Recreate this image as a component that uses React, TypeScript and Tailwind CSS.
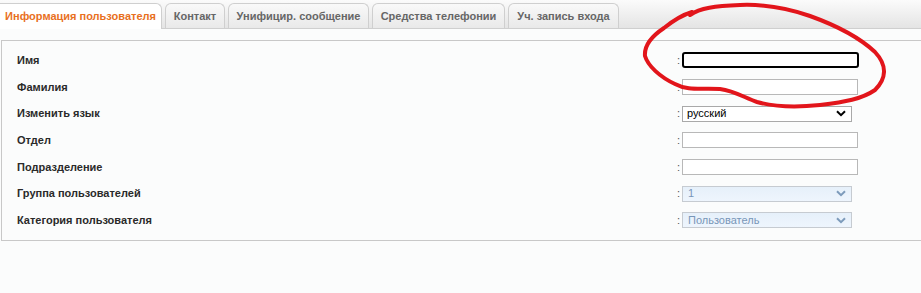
import React from "react";

const tabs = [
  { label: "Информация пользователя", w: "w-[162px]", active: true },
  { label: "Контакт", w: "w-[60px]" },
  { label: "Унифицир. сообщение", w: "w-[141px]" },
  { label: "Средства телефонии", w: "w-[133px]" },
  { label: "Уч. запись входа", w: "w-[111px]" },
];

function Chevron({ color }: { color: string }) {
  return (
    <svg width="10" height="7" viewBox="0 0 10 7" className="shrink-0">
      <path d="M1 1.2 L5 5.2 L9 1.2" fill="none" stroke={color} strokeWidth="2" />
    </svg>
  );
}

type Row = { label: string; kind: "focus" | "input" | "select" | "disabled"; value?: string };

const rows: Row[] = [
  { label: "Имя", kind: "focus" },
  { label: "Фамилия", kind: "input" },
  { label: "Изменить язык", kind: "select", value: "русский" },
  { label: "Отдел", kind: "input" },
  { label: "Подразделение", kind: "input" },
  { label: "Группа пользователей", kind: "disabled", value: "1" },
  { label: "Категория пользователя", kind: "disabled", value: "Пользователь" },
];

function Field({ row }: { row: Row }) {
  if (row.kind === "focus") {
    return <div className="h-[16px] w-[177px] rounded-[3px] border-2 border-black bg-white" />;
  }
  if (row.kind === "input") {
    return <div className="h-[16px] w-[176px] border border-[#b8b8b8] bg-white" />;
  }
  if (row.kind === "select") {
    return (
      <div className="flex h-[16px] w-[170px] items-center justify-between border border-[#a9a9a9] bg-white pl-[4px] pr-[5px] text-[11px] leading-none text-black">
        <span>{row.value}</span>
        <Chevron color="#000" />
      </div>
    );
  }
  return (
    <div className="flex h-[16px] w-[170px] items-center justify-between border border-[#c6cbd1] bg-gradient-to-b from-[#e6f0fa] to-[#eef5fd] pl-[5px] pr-[5px] text-[11px] leading-none text-[#7896b8]">
      <span>{row.value}</span>
      <Chevron color="#7d9bbb" />
    </div>
  );
}

export default function App() {
  return (
    <div
      className="relative h-[293px] w-[921px] overflow-hidden bg-[#fbfcfc]"
      style={{ fontFamily: '"Liberation Sans", Arial, sans-serif' }}
    >
      <div className="flex h-[29px] items-end border-b border-[#cfcfcf] bg-gradient-to-b from-[#fbfbfb] to-[#e4e4e4]">
        <div className="flex items-end gap-[3px]">
          {tabs.map((t) =>
            t.active ? (
              <div
                key={t.label}
                className={`${t.w} -mb-px flex h-[26px] items-center justify-center rounded-tr-[6px] border-r border-t border-[#cfcfcf] bg-white text-[11px] font-bold text-[#e8701e]`}
              >
                {t.label}
              </div>
            ) : (
              <div
                key={t.label}
                className={`${t.w} flex h-[25px] items-center justify-center rounded-t-[6px] border border-b-0 border-[#cfcfcf] bg-gradient-to-b from-[#f9f9f9] to-[#e9e9e9] text-[11px] font-bold text-[#666]`}
              >
                {t.label}
              </div>
            )
          )}
        </div>
      </div>

      <div className="ml-px mt-[11px] w-[940px] border border-[#c8c8c8] bg-[#fbfcfc] pb-[6px] pt-[6px]">
        {rows.map((r) => (
          <div key={r.label} className="flex h-[26.67px] items-center">
            <div className="w-[659px] pl-[15px] text-[11px] font-bold text-[#2a2a2a]">{r.label}</div>
            <div className="w-[21px] pl-[16px] text-[11px] text-[#555]">:</div>
            <Field row={r} />
          </div>
        ))}
      </div>

      <svg
        className="pointer-events-none absolute left-0 top-0"
        width="921"
        height="293"
        viewBox="0 0 921 293"
      >
        <path
          d="M690 15 C700 8 715 6 740 5 C765 4 790 9 810 16 C835 25 860 38 875 52 C888 66 886 79 875 90 C862 99 845 102 820 105 C800 107 775 107 757 102 C745 98 735 91 720 89 C700 88 688 91 675 84 C660 77 648 66 645 56 C644 45 652 36 664 28 C674 20 682 15 692 12"
          fill="none"
          stroke="#e2151b"
          strokeWidth="4"
          strokeLinecap="round"
          strokeLinejoin="round"
        />
      </svg>
    </div>
  );
}
